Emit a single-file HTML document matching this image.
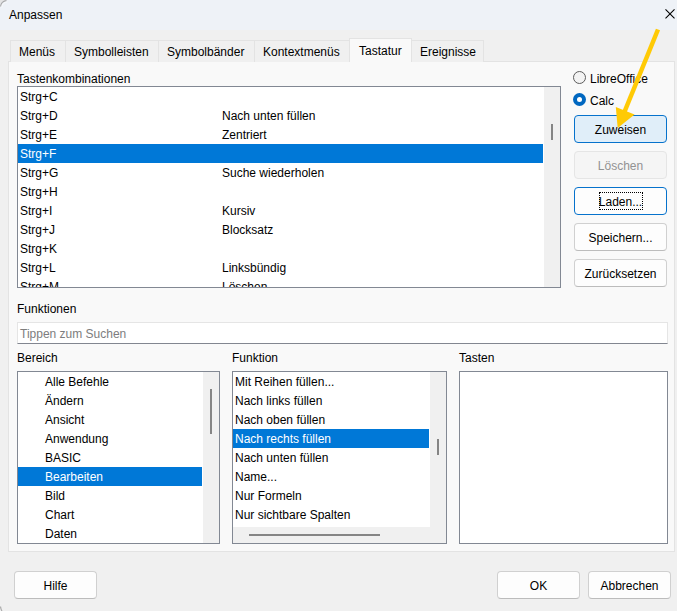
<!DOCTYPE html>
<html><head><meta charset="utf-8">
<style>
*{margin:0;padding:0;box-sizing:border-box}
html,body{width:677px;height:611px;overflow:hidden;background:#f0f0f0}
body{position:relative;font-family:"Liberation Sans",sans-serif;font-size:12px;color:#000}
.a{position:absolute;white-space:nowrap}
#title{left:0;top:0;width:677px;height:30px;background:#eef2f7}
#corner{left:0;top:0;width:20px;height:20px;border-top-left-radius:8px;border-top:1px solid #a8a8a8;border-left:1px solid #a8a8a8}
.t{line-height:19px;height:19px}
.tab{top:40px;height:22px;border:1px solid #e3e3e3;border-bottom:none;background:#f0f0f0;line-height:23px;padding-left:8px}
.tab.sel{top:38px;height:24px;background:#f9f9f9;line-height:25px;padding-left:9px;z-index:2}
#panel{left:8px;top:61px;width:667px;height:491px;background:#f9f9f9;border:1px solid #e3e3e3}
.lb{background:#fff;border:1px solid #828893;overflow:hidden}
.row{position:absolute;left:0;height:19px;line-height:21px;white-space:nowrap}
.selrow{background:#0078d7;color:#fff}
.vs{position:absolute;background:#f0f0f0}
.thumb{position:absolute;background:#858585}
.btn{border:1px solid #d0d0d0;border-bottom-color:#bcbcbc;border-radius:4px;background:#fdfdfd;text-align:center;line-height:28px;height:28px}
</style></head><body>
<div id="title" class="a"></div>
<svg class="a" style="left:0;top:0" width="10" height="10" viewBox="0 0 10 10"><path d="M0 0 H6 A6 6 0 0 0 0 6 Z" fill="#e4e4e4"/><path d="M0.6 6.5 A5.9 5.9 0 0 1 6.5 0.6" stroke="#a8a8a8" stroke-width="1.2" fill="none"/><path d="M1.9 7.5 A5.6 5.6 0 0 1 7.5 1.9" stroke="#f8fafc" stroke-width="1" fill="none"/></svg>
<div class="a t" style="left:9px;top:6px">Anpassen</div>
<svg class="a" style="left:664px;top:8px" width="12" height="12" viewBox="0 0 12 12"><path d="M1.5 1.3 L10.5 10.3 M10.5 1.3 L1.5 10.3" stroke="#000" stroke-width="1.1" fill="none"/></svg>

<div id="panel" class="a"></div>
<div class="a tab" style="left:10px;width:56px">Menüs</div>
<div class="a tab" style="left:65px;width:94px">Symbolleisten</div>
<div class="a tab" style="left:158px;width:97px">Symbolbänder</div>
<div class="a tab" style="left:254px;width:96px">Kontextmenüs</div>
<div class="a tab sel" style="left:349px;width:63px">Tastatur</div>
<div class="a tab" style="left:411px;width:73px">Ereignisse</div>

<div class="a t" style="left:17px;top:70px">Tastenkombinationen</div>

<!-- top list -->
<div class="a lb" style="left:17px;top:86px;width:544px;height:202px">
  <div class="row" style="top:0;left:2px">Strg+C</div>
  <div class="row" style="top:19px;left:2px">Strg+D</div><div class="row" style="top:19px;left:204px">Nach unten füllen</div>
  <div class="row" style="top:38px;left:2px">Strg+E</div><div class="row" style="top:38px;left:204px">Zentriert</div>
  <div class="row selrow" style="top:57px;left:0;width:525px;padding-left:2px">Strg+F</div>
  <div class="row" style="top:76px;left:2px">Strg+G</div><div class="row" style="top:76px;left:204px">Suche wiederholen</div>
  <div class="row" style="top:95px;left:2px">Strg+H</div>
  <div class="row" style="top:114px;left:2px">Strg+I</div><div class="row" style="top:114px;left:204px">Kursiv</div>
  <div class="row" style="top:133px;left:2px">Strg+J</div><div class="row" style="top:133px;left:204px">Blocksatz</div>
  <div class="row" style="top:152px;left:2px">Strg+K</div>
  <div class="row" style="top:171px;left:2px">Strg+L</div><div class="row" style="top:171px;left:204px">Linksbündig</div>
  <div class="row" style="top:190px;left:2px">Strg+M</div><div class="row" style="top:190px;left:204px">Löschen</div>
  <div class="vs" style="left:526px;top:0;width:16px;height:200px"></div>
  <div class="thumb" style="left:533px;top:37px;width:2px;height:16px"></div>
</div>

<!-- radios -->
<div class="a" style="left:573px;top:71px;width:13px;height:13px;border:1px solid #5c5c5c;border-radius:50%;background:#f3f3f3"></div>
<div class="a t" style="left:590px;top:70px">LibreOffice</div>
<div class="a" style="left:573px;top:93px;width:13px;height:13px;border-radius:50%;background:#0067c0"></div>
<div class="a" style="left:577px;top:97px;width:5px;height:5px;border-radius:50%;background:#fff"></div>
<div class="a t" style="left:590px;top:92px">Calc</div>

<!-- right buttons -->
<div class="a btn" style="left:574px;top:115px;width:93px;background:#e0eef9;border-color:#0672cc">Zuweisen</div>
<div class="a btn" style="left:574px;top:151px;width:93px;background:#f5f5f5;border-color:#e5e5e5;color:#929292">Löschen</div>
<div class="a btn" style="left:574px;top:187px;width:93px;border-color:#0672cc">Laden...</div>
<div class="a" style="left:599px;top:192px;width:44px;height:18px;border:1px dotted #000"></div>
<div class="a btn" style="left:574px;top:223px;width:93px">Speichern...</div>
<div class="a btn" style="left:574px;top:259px;width:93px">Zurücksetzen</div>

<div class="a t" style="left:17px;top:300px">Funktionen</div>
<div class="a" style="left:17px;top:322px;width:651px;height:22px;background:#fff;border:1px solid #e5e5e5;border-bottom-color:#828690"></div>
<div class="a t" style="left:20px;top:325px;color:#7d7d7d">Tippen zum Suchen</div>

<div class="a t" style="left:17px;top:349px">Bereich</div>
<div class="a t" style="left:232px;top:349px">Funktion</div>
<div class="a t" style="left:459px;top:349px">Tasten</div>

<!-- Bereich -->
<div class="a lb" style="left:17px;top:371px;width:203px;height:173px">
  <div class="row" style="top:0;left:27px">Alle Befehle</div>
  <div class="row" style="top:19px;left:27px">Ändern</div>
  <div class="row" style="top:38px;left:27px">Ansicht</div>
  <div class="row" style="top:57px;left:27px">Anwendung</div>
  <div class="row" style="top:76px;left:27px">BASIC</div>
  <div class="row selrow" style="top:95px;left:0;width:184px;padding-left:27px">Bearbeiten</div>
  <div class="row" style="top:114px;left:27px">Bild</div>
  <div class="row" style="top:133px;left:27px">Chart</div>
  <div class="row" style="top:152px;left:27px">Daten</div>
  <div class="vs" style="left:185px;top:0;width:16px;height:171px"></div>
  <div class="thumb" style="left:192px;top:17px;width:2px;height:45px"></div>
</div>

<!-- Funktion -->
<div class="a lb" style="left:232px;top:371px;width:215px;height:173px">
  <div class="row" style="top:0;left:2px">Mit Reihen füllen...</div>
  <div class="row" style="top:19px;left:2px">Nach links füllen</div>
  <div class="row" style="top:38px;left:2px">Nach oben füllen</div>
  <div class="row selrow" style="top:57px;left:0;width:196px;padding-left:2px">Nach rechts füllen</div>
  <div class="row" style="top:76px;left:2px">Nach unten füllen</div>
  <div class="row" style="top:95px;left:2px">Name...</div>
  <div class="row" style="top:114px;left:2px">Nur Formeln</div>
  <div class="row" style="top:133px;left:2px">Nur sichtbare Spalten</div>
  <div class="vs" style="left:197px;top:0;width:16px;height:171px"></div>
  <div class="vs" style="left:0;top:155px;width:213px;height:16px"></div>
  <div class="thumb" style="left:204px;top:67px;width:2px;height:16px"></div>
  <div class="thumb" style="left:16px;top:162px;width:131px;height:2px"></div>
</div>

<!-- Tasten -->
<div class="a lb" style="left:459px;top:371px;width:209px;height:173px"></div>

<!-- bottom buttons -->
<div class="a btn" style="left:14px;top:571px;width:83px">Hilfe</div>
<div class="a btn" style="left:497px;top:571px;width:83px">OK</div>
<div class="a btn" style="left:588px;top:571px;width:83px">Abbrechen</div>

<svg class="a" style="left:0;top:603px" width="8" height="8" viewBox="0 0 8 8"><path d="M0.5 3.5 Q0.8 6.5 2 8" stroke="#ababab" stroke-width="1.2" fill="none"/></svg>
<!-- arrow -->
<svg class="a" style="left:0;top:0" width="677" height="611" viewBox="0 0 677 611">
  <line x1="658" y1="29.5" x2="624" y2="113" stroke="#ffca05" stroke-width="4.5" stroke-linecap="butt"/>
  <polygon points="615.8,107 634.6,114.5 617.7,128" fill="#ffca05"/>
</svg>
</body></html>
